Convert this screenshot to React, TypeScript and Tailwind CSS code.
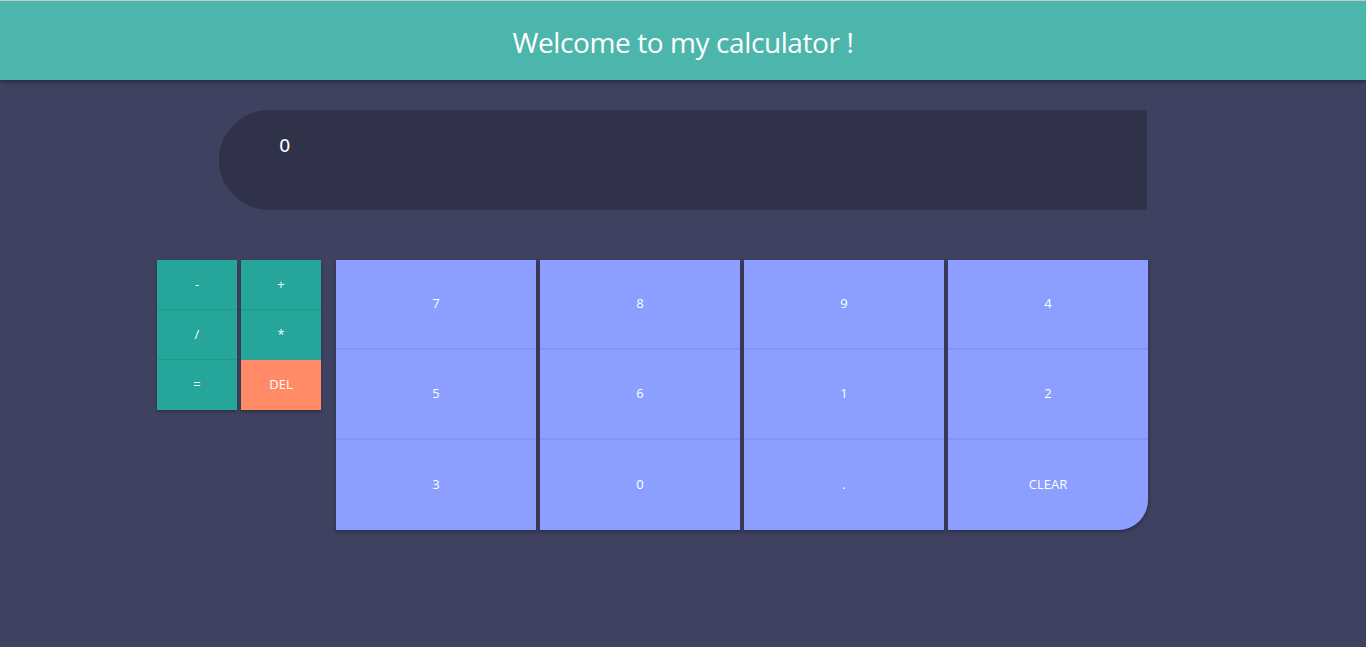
import React, { useState } from "react";

const ops: { label: string; color: string; line: boolean }[] = [
  { label: "-", color: "bg-[#26a69a]", line: true },
  { label: "+", color: "bg-[#26a69a]", line: true },
  { label: "/", color: "bg-[#26a69a]", line: true },
  { label: "*", color: "bg-[#26a69a]", line: false },
  { label: "=", color: "bg-[#26a69a]", line: false },
  { label: "DEL", color: "bg-[#ff8a65]", line: false },
];

const columns: string[][] = [
  ["7", "5", "3"],
  ["8", "6", "0"],
  ["9", "1", "."],
  ["4", "2", "CLEAR"],
];

const App: React.FC = () => {
  const [display, setDisplay] = useState<string>("0");

  const press = (key: string) => {
    if (key === "CLEAR") return setDisplay("0");
    if (key === "DEL") return setDisplay((d) => (d.length > 1 ? d.slice(0, -1) : "0"));
    if (key === "=") {
      try {
        // eslint-disable-next-line no-new-func
        setDisplay(String(Function(`return (${display})`)()));
      } catch {
        setDisplay("0");
      }
      return;
    }
    setDisplay((d) => (d === "0" && key !== "." ? key : d + key));
  };

  return (
    <div
      className="min-h-[647px] bg-[#3e4160] text-white"
      style={{ fontFamily: '"Open Sans", sans-serif' }}
    >
      <header className="h-[80px] bg-[#4db6ac] border-t border-[#c8c8c8] shadow-[0_2px_4px_rgba(0,0,0,0.35)] flex items-center justify-center">
        <h1 className="text-[28px] font-normal tracking-[-0.4px] pt-[3px]">Welcome to my calculator !</h1>
      </header>

      <div className="pt-[30px] pl-[219px]">
        <div className="w-[928px] h-[100px] bg-[#30324a] rounded-l-[50px] pl-[60px] pt-[22px]">
          <span className="text-[18px]" style={{ fontFamily: '"DejaVu Sans", sans-serif' }}>
            {display}
          </span>
        </div>
      </div>

      <div className="flex items-start pt-[50px] pl-[157px]">
        <div className="grid grid-cols-[80px_80px] gap-x-[4px]">
          {ops.map((o) => (
            <button
              key={o.label}
              onClick={() => press(o.label)}
              className={`${o.color} h-[50px] text-[13px] text-white shadow-[0_2px_3px_rgba(0,0,0,0.25)] ${
                o.line ? "border-b border-[#239a8f]" : ""
              }`}
            >
              {o.label}
            </button>
          ))}
        </div>

        <div className="ml-[15px] flex gap-[4px]">
          {columns.map((col, ci) => (
            <div
              key={ci}
              className={`flex flex-col w-[200px] shadow-[0_2px_4px_rgba(0,0,0,0.3)] ${
                ci === 3 ? "rounded-br-[30px]" : ""
              }`}
            >
              {col.map((k, ri) => (
                <button
                  key={k}
                  onClick={() => press(k)}
                  className={`bg-[#8c9eff] text-[13px] text-white ${
                    ri < 2 ? "h-[90px] border-b-2 border-[#8496f4]" : "h-[90px]"
                  } ${ci === 3 && ri === 2 ? "rounded-br-[30px]" : ""}`}
                >
                  {k}
                </button>
              ))}
            </div>
          ))}
        </div>
      </div>
    </div>
  );
};

export default App;
